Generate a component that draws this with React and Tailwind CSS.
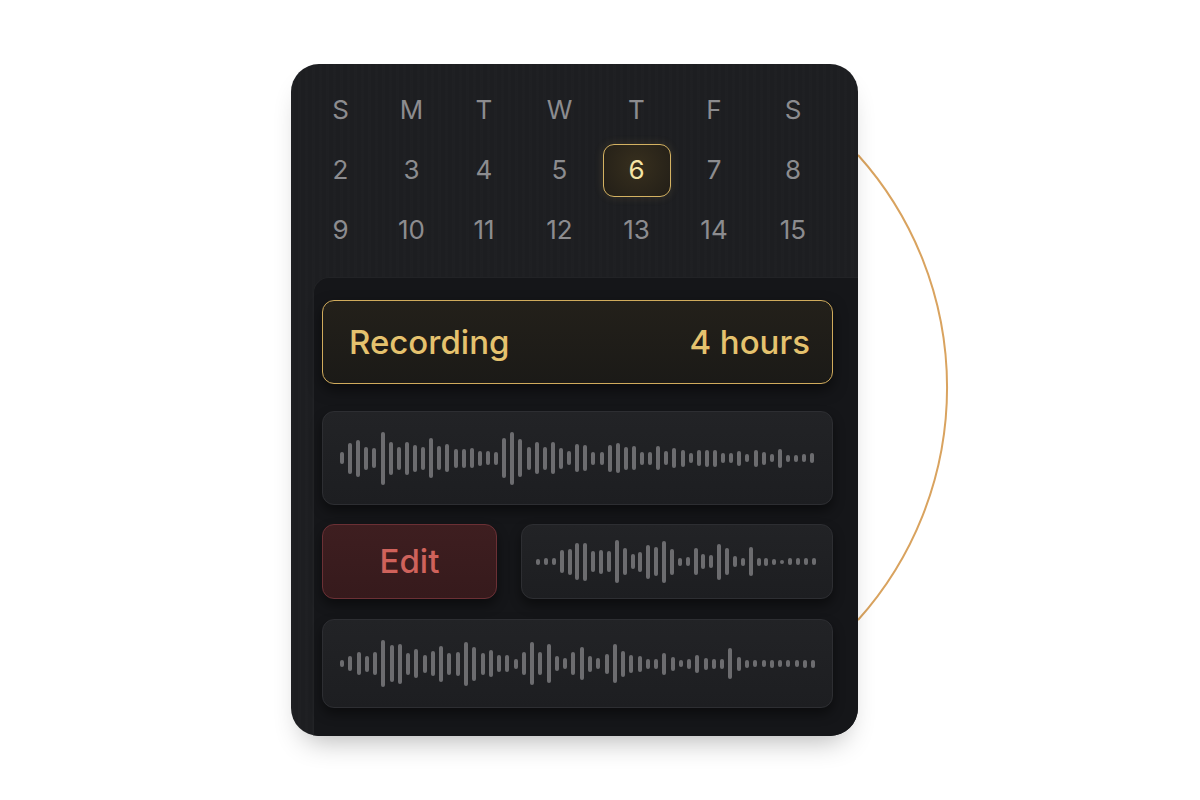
import React from "react";

const W1 = [12,31,37,23,20,53,33,23,33,27,23,40,24,28,19,19,20,15,14,13,40,53,38,23,32,23,32,21,14,28,26,13,13,27,30,23,24,13,13,24,14,20,17,10,16,17,17,10,10,15,8,17,13,8,19,7,7,8,10];
const W2 = [6,7,7,23,26,37,38,21,24,21,43,27,15,20,34,29,42,26,8,9,27,15,13,36,27,11,8,29,8,8,6,4,7,7,7,7];
const W3 = [7,15,23,16,23,47,37,40,22,29,18,25,36,22,24,44,34,22,27,17,17,10,23,43,23,39,15,11,23,33,16,11,20,39,26,18,16,10,10,22,14,7,10,18,12,10,10,31,14,8,7,7,8,7,7,7,8,8];

function Wave({ heights, className }) {
  return (
    <div className={"flex items-center justify-between " + className}>
      {heights.map((h, i) => (
        <div key={i} className="w-[4px] rounded-full bg-[#6c6c6f]" style={{ height: h + "px" }} />
      ))}
    </div>
  );
}

const days = ["S", "M", "T", "W", "T", "F", "S"];
const row1 = ["2", "3", "4", "5", "6", "7", "8"];
const row2 = ["9", "10", "11", "12", "13", "14", "15"];

const cardCls =
  "rounded-[12px] border border-[#2d2e32] bg-[linear-gradient(180deg,#222326,#1d1e21)] shadow-[0_6px_12px_rgba(0,0,0,0.45)] flex items-center";

export default function App() {
  return (
    <div className="min-h-screen bg-white font-['Inter','Noto_Sans',sans-serif]">
      <div className="pl-[291px] pt-[64px]">
        <div className="relative w-[680px]">
          <svg className="absolute left-0 top-0" width="680" height="600" viewBox="0 0 680 600" fill="none">
            <path d="M 567 91 A 348 348 0 0 1 567 556" stroke="#d9a35f" strokeWidth="2" />
          </svg>
          <div className="relative z-10 w-[567px] h-[672px] rounded-[28px] bg-[#1d1e21] bg-[repeating-linear-gradient(90deg,rgba(255,255,255,0.008)_0px,rgba(255,255,255,0.008)_3px,rgba(0,0,0,0.012)_3px,rgba(0,0,0,0.012)_7px)] overflow-hidden flex flex-col shadow-[0_16px_28px_-12px_rgba(0,0,0,0.3)]">
            <div className="pt-[16px] pb-[17px] pl-[14px]">
              <div className="grid grid-cols-[71px_71px_74px_77px_77px_78px_80px] grid-rows-[60px_60px_60px] text-[26px] leading-none text-[#8c8c8f]">
                {days.map((d, i) => (
                  <div key={"d" + i} className="flex items-center justify-center">{d}</div>
                ))}
                {row1.map((d, i) => (
                  <div key={"a" + i} className="flex items-center justify-center">
                    {d === "6" ? (
                      <div className="w-[68px] h-[53px] rounded-[11px] border-[1.5px] border-[#d4b262] bg-[radial-gradient(circle_at_50%_40%,#372f1e,#221e17)] flex items-center justify-center text-[#f4e4a4] shadow-[0_0_10px_rgba(207,174,94,0.15)]">
                        6
                      </div>
                    ) : (
                      d
                    )}
                  </div>
                ))}
                {row2.map((d, i) => (
                  <div key={"b" + i} className="flex items-center justify-center">{d}</div>
                ))}
              </div>
            </div>
            <div className="ml-[22px] flex-1 rounded-tl-[16px] bg-[#151619] border-t border-l border-[#222326] pl-[8px] pr-[25px] pt-[22px] flex flex-col">
              <div className="h-[84px] rounded-[12px] border-[1.5px] border-[#d0ab5c] bg-[linear-gradient(180deg,#23201a,#1b1a17)] shadow-[0_6px_14px_rgba(0,0,0,0.5)] flex items-center justify-between pl-[26px] pr-[22px] text-[33px] font-medium leading-none text-[#e5c26e]">
                <span>Recording</span>
                <span>4 hours</span>
              </div>
              <div className={cardCls + " mt-[27px] h-[94px]"}>
                <Wave heights={W1} className="ml-[17px] w-[475px]" />
              </div>
              <div className="mt-[19px] h-[75px] flex gap-[24px]">
                <div className="w-[175px] rounded-[12px] border border-[#6b3035] bg-[linear-gradient(180deg,#3e1e20,#361a1c)] shadow-[0_6px_12px_rgba(0,0,0,0.45)] flex items-center justify-center text-[33px] font-medium leading-none text-[#cf625b]">
                  Edit
                </div>
                <div className={cardCls + " flex-1"}>
                  <Wave heights={W2} className="ml-[14px] w-[280px]" />
                </div>
              </div>
              <div className={cardCls + " mt-[20px] h-[89px]"}>
                <Wave heights={W3} className="ml-[17px] w-[476px]" />
              </div>
            </div>
          </div>
        </div>
      </div>
    </div>
  );
}
